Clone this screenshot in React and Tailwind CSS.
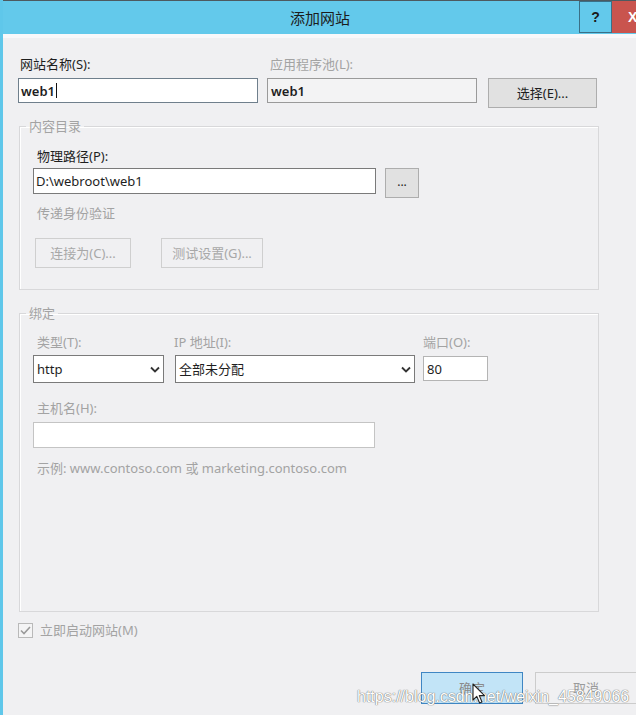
import React from "react";

const Chevron = () => (
  <svg width="10" height="7" viewBox="0 0 10 7" className="shrink-0">
    <path d="M1 1.5 L5 5.5 L9 1.5" fill="none" stroke="#333" strokeWidth="1.8" />
  </svg>
);

export default function App() {
  return (
    <div className="w-[636px] h-[715px] overflow-hidden relative flex flex-col border-l-[3px] border-[#5fc7ea] bg-[#f0f0f2] font-['Noto_Sans','Noto_Sans_CJK_SC',sans-serif] text-[13px] leading-[16px] text-[#1e1e1e]">
      {/* Title bar */}
      <div className="h-[34px] shrink-0 grid grid-cols-[1fr_auto_1fr] items-center bg-[#63c9eb] border-t border-[#4d5a60]">
        <div />
        <div className="text-[15px] text-[#1c1c1c] pl-[1px]">添加网站</div>
        <div className="flex justify-end self-start h-full">
          <div className="w-[33px] h-[32px] border border-[#3b6f86] bg-[#63c9eb] flex items-center justify-center text-[14px] font-bold text-[#1a1a1a] font-['Liberation_Sans',sans-serif]">?</div>
          <div className="w-[24px] h-[32px] bg-[#c9544e] overflow-hidden flex items-center pl-[16px] text-[14px] font-bold text-white font-['Liberation_Sans',sans-serif]">X</div>
        </div>
      </div>
      <div className="h-[4px] shrink-0 bg-[#f8f8fa]" />

      {/* Body */}
      <div className="flex flex-col pl-[15px]">
        {/* Row 1 */}
        <div className="flex mt-[18px]">
          <div className="flex flex-col w-[240px]">
            <div className="pl-[2px] h-[16px]">网站名称(S):</div>
            <div className="mt-[6px] h-[25px] bg-white border border-[#6f7f8c] flex items-center pl-[2px] font-semibold">
              web1<span className="w-px h-[15px] bg-[#111] ml-[1px]" />
            </div>
          </div>
          <div className="flex flex-col w-[210px] ml-[9px]">
            <div className="pl-[3px] h-[16px] text-[#a3a3a3]">应用程序池(L):</div>
            <div className="mt-[6px] h-[25px] bg-[#f3f3f4] border border-[#9a9a9a] flex items-center pl-[3px] font-semibold">web1</div>
          </div>
          <div className="flex flex-col ml-[11px]">
            <div className="h-[22px]" />
            <div className="w-[109px] h-[30px] bg-[#e1e1e1] border border-[#adadad] flex items-center justify-center">选择(E)...</div>
          </div>
        </div>

        {/* Group 1 */}
        <fieldset className="mt-[10px] ml-[1px] w-[580px] border border-[#d8d8da] shadow-[inset_1px_1px_0_#ffffff] px-0 pb-[21px]">
          <legend className="ml-[6px] px-[3px] text-[#a3a3a3] leading-[16px]">内容目录</legend>
          <div className="flex flex-col pl-[13px]">
            <div className="mt-[14px] pl-[4px] h-[16px]">物理路径(P):</div>
            <div className="flex mt-[4px] items-start">
              <div className="w-[343px] h-[26px] bg-white border border-[#7a7a7a] flex items-center pl-[2px]">D:\webroot\web1</div>
              <div className="ml-[9px] w-[34px] h-[30px] bg-[#e1e1e1] border border-[#adadad] flex items-center justify-center text-[12px] leading-none pb-[2px]">...</div>
            </div>
            <div className="mt-[7px] pl-[4px] h-[16px] text-[#a3a3a3]">传递身份验证</div>
            <div className="flex mt-[17px] ml-[2px]">
              <div className="w-[96px] h-[30px] border border-[#cfcfcf] bg-[#f0f0f2] flex items-center justify-center text-[#a8a8a8]">连接为(C)...</div>
              <div className="ml-[30px] w-[102px] h-[30px] border border-[#cfcfcf] bg-[#f0f0f2] flex items-center justify-center text-[#a8a8a8]">测试设置(G)...</div>
            </div>
          </div>
        </fieldset>

        {/* Group 2 */}
        <fieldset className="mt-[15px] ml-[1px] w-[580px] border border-[#d8d8da] shadow-[inset_1px_1px_0_#ffffff] px-0 pb-[135px]">
          <legend className="ml-[6px] px-[3px] text-[#a3a3a3] leading-[16px]">绑定</legend>
          <div className="flex flex-col pl-[13px]">
            <div className="flex mt-[13px]">
              <div className="flex flex-col w-[131px]">
                <div className="pl-[4px] h-[16px] text-[#a3a3a3]">类型(T):</div>
                <div className="mt-[5px] h-[28px] bg-white border border-[#7a7a7a] flex items-center justify-between pl-[3px] pr-[3px]">
                  <span>http</span>
                  <Chevron />
                </div>
              </div>
              <div className="flex flex-col w-[240px] ml-[11px]">
                <div className="h-[16px] text-[#a3a3a3] -ml-[1px]">IP 地址(I):</div>
                <div className="mt-[5px] h-[28px] bg-white border border-[#7a7a7a] flex items-center justify-between pl-[3px] pr-[3px]">
                  <span>全部未分配</span>
                  <Chevron />
                </div>
              </div>
              <div className="flex flex-col w-[65px] ml-[8px]">
                <div className="h-[16px] text-[#a3a3a3]">端口(O):</div>
                <div className="mt-[6px] h-[25px] bg-white border border-[#b4b4b4] flex items-center pl-[3px]">80</div>
              </div>
            </div>
            <div className="mt-[17px] pl-[4px] h-[16px] text-[#a3a3a3]">主机名(H):</div>
            <div className="mt-[6px] w-[342px] h-[26px] bg-white border border-[#c4c4c4]" />
            <div className="mt-[12px] pl-[4px] h-[16px] text-[#a3a3a3]">示例: www.contoso.com 或 marketing.contoso.com</div>
          </div>
        </fieldset>

        {/* Checkbox */}
        <div className="flex items-center mt-[10px]">
          <div className="w-[15px] h-[15px] border border-[#b9b9b9] bg-[#f4f4f5] flex items-center justify-center">
            <svg width="11" height="9" viewBox="0 0 11 9">
              <path d="M1 4.5 L4 7.5 L10 1" fill="none" stroke="#9a9a9a" strokeWidth="1.6" />
            </svg>
          </div>
          <div className="ml-[7px] text-[#a3a3a3]">立即启动网站(M)</div>
        </div>

        {/* Buttons */}
        <div className="flex mt-[34px] ml-[403px]">
          <div className="shrink-0 w-[102px] h-[32px] bg-[#c2e4f7] border border-[#3f86c3] flex items-center justify-center text-[#8a8a8a]">确定</div>
          <div className="shrink-0 ml-[12px] w-[102px] h-[32px] bg-[#f0f0f2] border border-[#cccccc] flex items-center justify-center text-[#9a9a9a]">取消</div>
        </div>
      </div>

      {/* Watermark */}
      <div className="absolute left-[354px] top-[687px] text-[16px] leading-[20px] text-white font-['Liberation_Sans',sans-serif] [text-shadow:0_0_1px_#6b6b6b,0_0_1px_#6b6b6b] whitespace-nowrap">
        https://blog.csdn.net/weixin_45849066
      </div>

      {/* Mouse cursor */}
      <svg className="absolute left-[469px] top-[683px]" width="14" height="22" viewBox="0 0 14 22">
        <path d="M1 1 L1 17 L4.8 13.4 L7.6 20 L10 19 L7.3 12.6 L12.5 12.6 Z" fill="#ffffff" stroke="#222" strokeWidth="1.1" strokeLinejoin="round" />
      </svg>
    </div>
  );
}
